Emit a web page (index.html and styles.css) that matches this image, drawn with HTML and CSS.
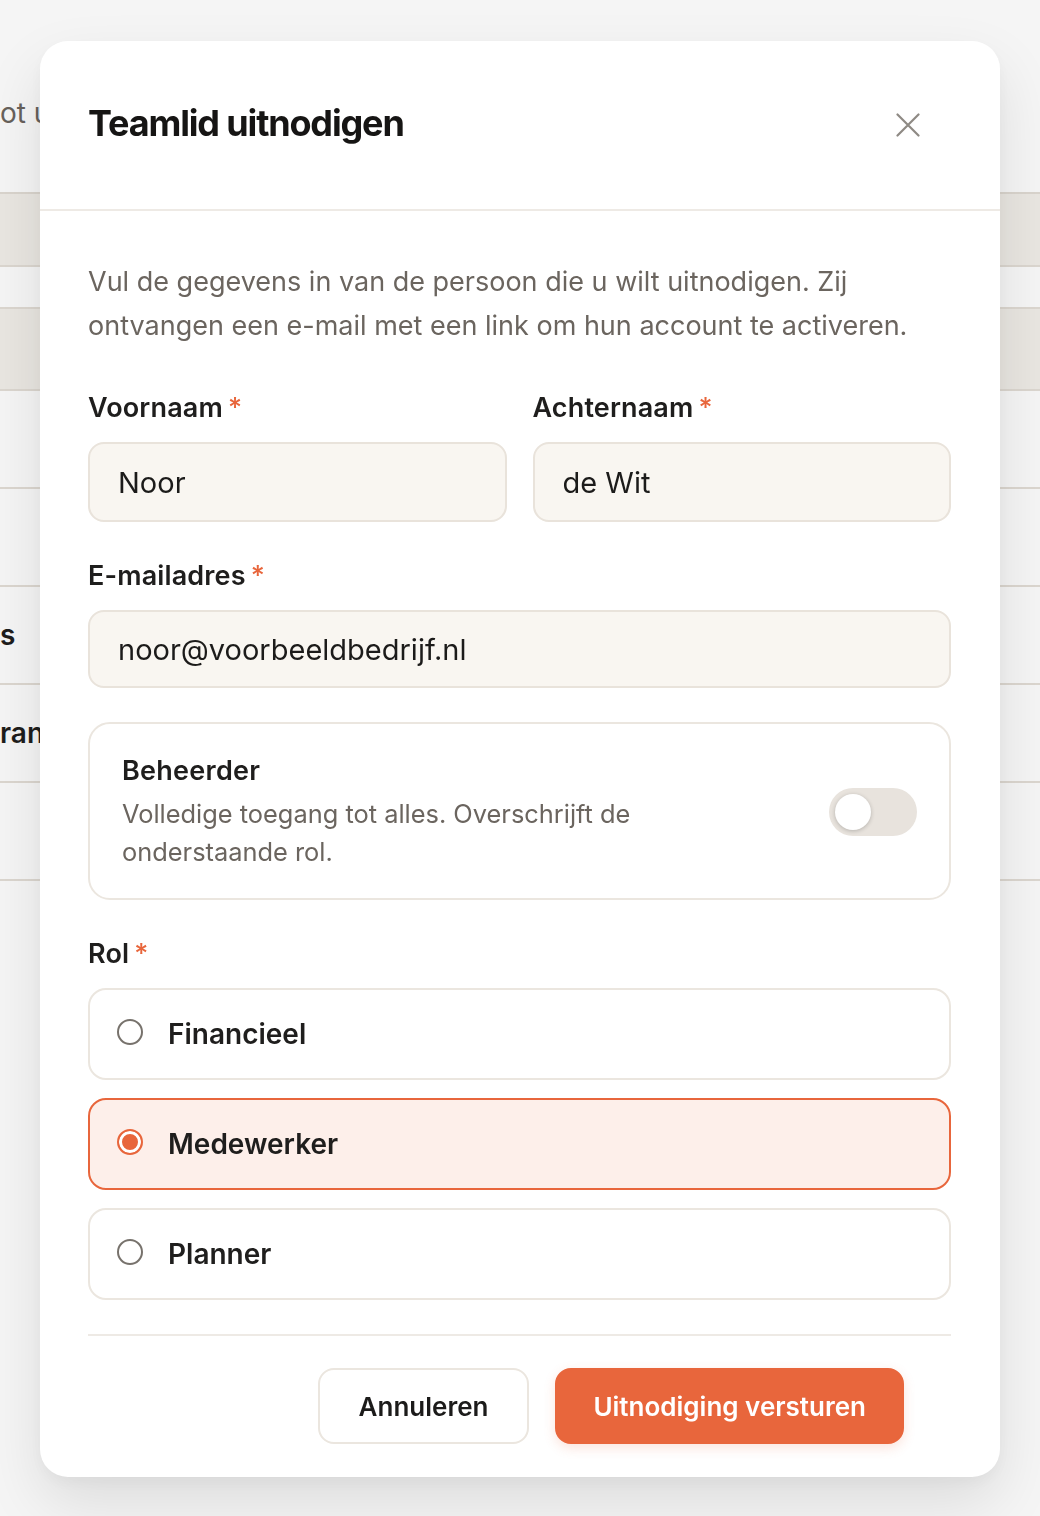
FILE: index.html
```html
<!DOCTYPE html>
<html lang="nl">
<head>
<meta charset="utf-8">
<title>Teamlid uitnodigen</title>
<link rel="stylesheet" href="styles.css">
</head>
<body>
<div class="page" aria-hidden="true">
  <div class="page-head">
    <p class="page-sub"><span class="lead">Beheer wie toegang heeft t</span><span>ot uw</span></p>
  </div>
  <div class="table">
    <div class="trow band band-head"></div>
    <div class="trow thin"></div>
    <div class="trow band band-row"></div>
    <div class="trow"></div>
    <div class="trow"></div>
    <div class="trow"><span class="cell"><span class="lead">Thoma</span><span class="tail-s">s</span></span></div>
    <div class="trow"><span class="cell"><span class="lead">F</span><span>rank</span></span></div>
    <div class="trow"></div>
  </div>
</div>
<div class="overlay"></div>

<div class="modal" role="dialog" aria-labelledby="modal-title">
  <header class="modal-header">
    <h2 id="modal-title" class="modal-title">Teamlid uitnodigen</h2>
    <button class="close-btn" type="button" aria-label="Sluiten">
      <svg width="24" height="24" viewBox="0 0 24 24" fill="none" stroke="currentColor" stroke-width="2.2" stroke-linecap="round"><path d="M1.5 1.5 22.5 22.5M22.5 1.5 1.5 22.5"/></svg>
    </button>
  </header>

  <form class="modal-body">
    <p class="intro">Vul de gegevens in van de persoon die u wilt uitnodigen. Zij ontvangen een e-mail met een link om hun account te activeren.</p>

    <div class="name-row">
      <div class="field">
        <label class="label" for="first">Voornaam<span class="req">*</span></label>
        <input class="input" id="first" type="text" value="Noor">
      </div>
      <div class="field">
        <label class="label" for="last">Achternaam<span class="req">*</span></label>
        <input class="input" id="last" type="text" value="de Wit">
      </div>
    </div>

    <div class="field field-email">
      <label class="label" for="email">E-mailadres<span class="req">*</span></label>
      <input class="input input-email" id="email" type="email" value="noor@voorbeeldbedrijf.nl">
    </div>

    <div class="admin-card">
      <div class="admin-text">
        <div class="admin-title">Beheerder</div>
        <div class="admin-desc">Volledige toegang tot alles. Overschrijft de onderstaande rol.</div>
      </div>
      <span class="switch" role="switch" aria-checked="false"><span class="knob"></span></span>
    </div>

    <div class="role-group">
      <div class="label">Rol<span class="req">*</span></div>
      <div class="options">
        <label class="option"><input type="radio" name="rol"><span>Financieel</span></label>
        <label class="option selected"><input type="radio" name="rol" checked><span>Medewerker</span></label>
        <label class="option"><input type="radio" name="rol"><span>Planner</span></label>
      </div>
    </div>

    <div class="modal-footer">
      <button type="button" class="btn btn-secondary">Annuleren</button>
      <button type="button" class="btn btn-primary">Uitnodiging versturen</button>
    </div>
  </form>
</div>
</body>
</html>
```

FILE: styles.css
```css
* { box-sizing: border-box; }

html, body {
  margin: 0;
  padding: 0;
}

body {
  width: 1040px;
  height: 1516px;
  overflow: hidden;
  position: relative;
  background: #ffffff;
  font-family: Inter, "Noto Sans", "Liberation Sans", sans-serif;
  color: #1c1b1a;
}

/* ---------- background page ---------- */
.page {
  height: 1516px;
  background: #ffffff;
}

.page-head {
  height: 192px;
  padding-top: 96px;
}

.page-sub {
  display: flex;
  margin: 0;
  font-size: 28px;
  line-height: 34px;
  color: #6b655f;
  white-space: nowrap;
}

.lead {
  width: 0;
  display: flex;
  justify-content: flex-end;
  white-space: nowrap;
}

.table {
  border-top: 2px solid #e2ddd6;
}

.trow {
  height: 98px;
  border-bottom: 2px solid #e4dfd8;
  display: flex;
  align-items: center;
}

.trow.band { background: #f3f0eb; }
.band-head { height: 73px; }
.thin { height: 42px; }
.band-row { height: 82px; }

.cell {
  display: flex;
  white-space: nowrap;
  font-size: 28px;
  font-weight: 600;
  color: #1f1e1d;
}

.tail-s { margin-right: 6px; }

.overlay {
  position: fixed;
  inset: 0;
  background: rgba(20, 20, 20, 0.045);
}

/* ---------- modal ---------- */
.modal {
  position: absolute;
  left: 40px;
  top: 41px;
  width: 960px;
  background: #ffffff;
  border-radius: 28px;
  box-shadow: 0 26px 60px rgba(0, 0, 0, 0.10), 0 6px 18px rgba(0, 0, 0, 0.04);
}

.modal-header {
  height: 170px;
  display: flex;
  align-items: center;
  justify-content: space-between;
  padding: 0 20px 0 48px;
  border-bottom: 2px solid #eeeae5;
}

.modal-title {
  margin: -5px 0 0;
  font-size: 36px;
  font-weight: 700;
  letter-spacing: -0.032em;
  color: #161514;
}

.close-btn {
  width: 48px;
  height: 48px;
  margin-right: 48px;
  border: 0;
  padding: 0;
  background: transparent;
  color: #8e8a84;
  display: flex;
  align-items: center;
  justify-content: center;
  cursor: pointer;
}

.modal-body {
  display: flex;
  flex-direction: column;
  padding: 49px 49px 0 48px;
  margin: 0;
}

.intro {
  margin: 0 0 42px;
  font-size: 27px;
  line-height: 44px;
  color: #6b655f;
}

.name-row {
  display: grid;
  grid-template-columns: 1fr 1fr;
  column-gap: 26px;
  margin-bottom: 36px;
}

.field {
  display: flex;
  flex-direction: column;
}

.label {
  display: block;
  font-size: 27px;
  line-height: 36px;
  font-weight: 600;
  color: #1f1e1d;
  margin-bottom: 16px;
  letter-spacing: 0.005em;
}

.req {
  color: #e8663c;
  margin-left: 5px;
  font-weight: 500;
}

.input {
  height: 80px;
  width: 100%;
  border: 2px solid #e9e3db;
  border-radius: 16px;
  background: #f9f6f1;
  padding: 0 28px;
  font-family: inherit;
  font-size: 29px;
  color: #1c1b1a;
  outline: none;
}

.input-email { height: 78px; }

.field-email { margin-bottom: 34px; }

/* admin card */
.admin-card {
  height: 178px;
  border: 2px solid #ebe6df;
  border-radius: 22px;
  padding: 2px 32px 0 32px;
  display: flex;
  align-items: center;
  justify-content: space-between;
  margin-bottom: 36px;
}

.admin-title {
  font-size: 27px;
  line-height: 36px;
  font-weight: 600;
  letter-spacing: 0.01em;
  color: #1f1e1d;
  margin-bottom: 6px;
}

.admin-desc {
  max-width: 560px;
  font-size: 25.4px;
  line-height: 38px;
  color: #6b655f;
}

.switch {
  width: 88px;
  height: 48px;
  border-radius: 24px;
  background: #e8e3dd;
  padding: 6px;
  display: flex;
  align-items: center;
  flex-shrink: 0;
}

.knob {
  width: 36px;
  height: 36px;
  border-radius: 50%;
  background: #ffffff;
  box-shadow: 0 1px 4px rgba(0, 0, 0, 0.22);
}

/* role */
.options {
  display: flex;
  flex-direction: column;
  gap: 18px;
}

.option {
  height: 92px;
  border: 2px solid #ebe6df;
  border-radius: 18px;
  display: flex;
  align-items: center;
  gap: 25px;
  padding: 0 27px;
  font-size: 28px;
  font-weight: 600;
  color: #1f1e1d;
  cursor: pointer;
}

.option.selected {
  background: #fdefea;
  border-color: #e8663c;
}

.option input {
  appearance: none;
  -webkit-appearance: none;
  margin: -5px 0 0;
  width: 26px;
  height: 26px;
  border: 2px solid #77726c;
  border-radius: 50%;
  background: #ffffff;
  flex-shrink: 0;
}

.option input:checked {
  border-color: #e8663c;
  background: #e8663c;
  box-shadow: inset 0 0 0 3px #ffffff;
}

/* footer */
.modal-footer {
  margin-top: 34px;
  border-top: 2px solid #eeeae5;
  padding: 32px 47px 33px 0;
  display: flex;
  justify-content: flex-end;
  gap: 26px;
}

.btn {
  height: 76px;
  border-radius: 16px;
  font-family: inherit;
  font-size: 26px;
  font-weight: 600;
  cursor: pointer;
}

.btn-secondary {
  padding: 0 39px;
  background: #ffffff;
  border: 2px solid #ebe6df;
  color: #1c1b1a;
}

.btn-primary {
  padding: 0 36px;
  background: #e8663c;
  border: 2px solid #e8663c;
  color: #ffffff;
  box-shadow: 0 4px 12px rgba(232, 102, 60, 0.18);
}
```
